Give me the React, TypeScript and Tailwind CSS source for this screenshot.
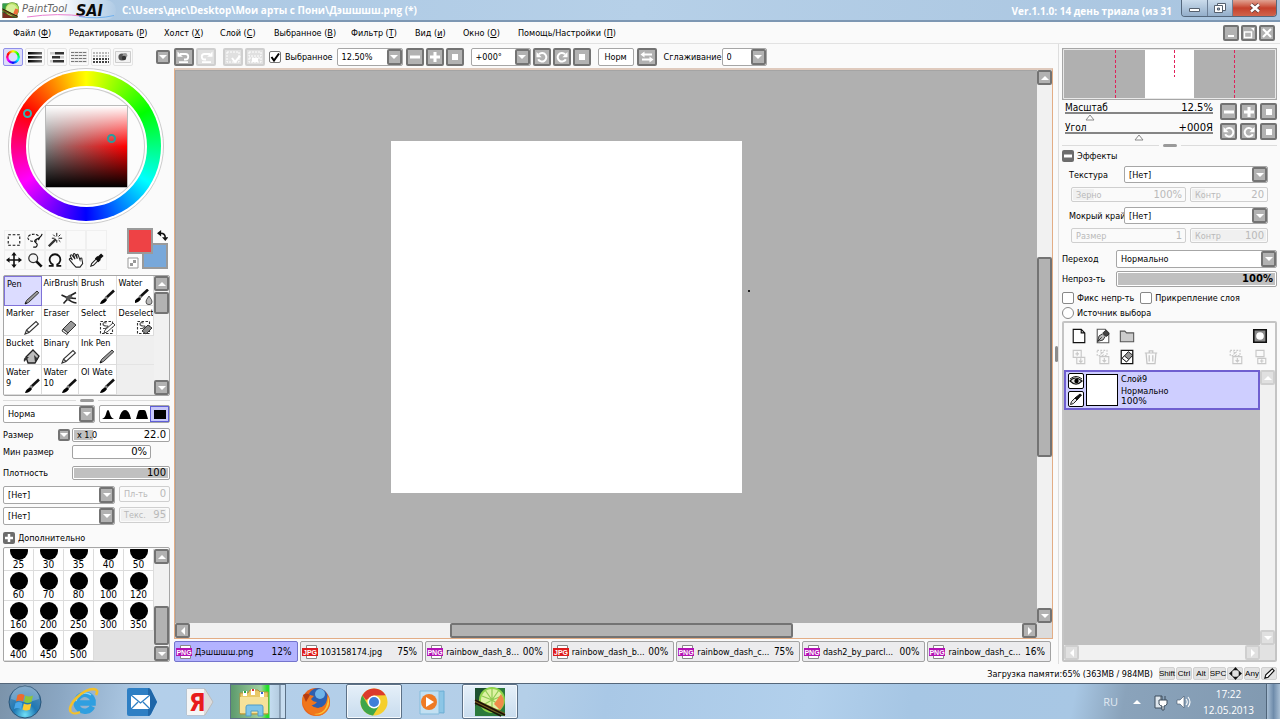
import React from "react";

type Dir = "up" | "down" | "left" | "right";

const ARROWS: Record<Dir, string> = {
  up: "M1 7 L5 3 L9 7Z",
  down: "M1 3 L5 7 L9 3Z",
  left: "M7 1 L3 5 L7 9Z",
  right: "M3 1 L7 5 L3 9Z",
};

function Arrow({ dir }: { dir: Dir }) {
  return (
    <svg viewBox="0 0 10 10" className="size-2.5 shrink-0">
      <path d={ARROWS[dir]} fill="#fff" />
    </svg>
  );
}

const WIDE = "font-['DejaVu_Sans',Verdana,sans-serif]";

function Gray({
  label,
  faded,
  className = "size-[17px]",
  children,
}: {
  label: string;
  faded?: boolean;
  className?: string;
  children: React.ReactNode;
}) {
  return (
    <button
      type="button"
      aria-label={label}
      disabled={faded}
      className={`flex shrink-0 items-center justify-center rounded-[2px] border-2 ${
        faded ? "border-[#cfcfcf] bg-[#e0e0e0]" : "border-[#737373] bg-[#b2b2b2]"
      } ${className}`}
    >
      {children}
    </button>
  );
}

const Minus = () => (
  <svg viewBox="0 0 14 14" className="size-3.5 shrink-0"><path d="M2 7h10" stroke="#fff" strokeWidth="3" /></svg>
);
const Plus = () => (
  <svg viewBox="0 0 14 14" className="size-3.5 shrink-0"><path d="M2 7h10M7 2v10" stroke="#fff" strokeWidth="3" /></svg>
);
const Stop = () => (
  <svg viewBox="0 0 14 14" className="size-3.5 shrink-0"><path d="M4 4h6v6h-6z" fill="#fff" /></svg>
);
const RotL = () => (
  <svg viewBox="0 0 14 14" className="size-3.5 shrink-0">
    <path d="M4 4.2a4.3 4.3 0 1 1-.8 5" fill="none" stroke="#fff" strokeWidth="2" />
    <path d="M1.5 2v5.2h5.2z" fill="#fff" />
  </svg>
);
const RotR = () => (
  <svg viewBox="0 0 14 14" className="size-3.5 shrink-0">
    <path d="M10 4.2a4.3 4.3 0 1 0 .8 5" fill="none" stroke="#fff" strokeWidth="2" />
    <path d="M12.5 2v5.2h-5.2z" fill="#fff" />
  </svg>
);
const Undo = () => (
  <svg viewBox="0 0 16 14" className="h-3.5 w-4 shrink-0">
    <path d="M4 4h5.5a2.7 2.7 0 0 1 0 5.5H8M3 12.2h9" fill="none" stroke="#fff" strokeWidth="1.8" />
    <path d="M1.5 6.8V1.5L6.8 6.8z" fill="#fff" />
  </svg>
);
const Redo = () => (
  <svg viewBox="0 0 16 14" className="h-3.5 w-4 shrink-0">
    <path d="M12 4H6.5a2.7 2.7 0 0 0 0 5.5H8M4 12.2h9" fill="none" stroke="#fff" strokeWidth="1.8" />
    <path d="M14.5 6.8V1.5L9.2 6.8z" fill="#fff" />
  </svg>
);

function Scrollbar({
  vertical,
  before,
  thumb,
  after,
  faded,
}: {
  vertical?: boolean;
  before: number;
  thumb: number;
  after: number;
  faded?: boolean;
}) {
  return (
    <div className={`flex shrink-0 bg-[#f1f1f1] ${vertical ? "w-[15px] flex-col" : "h-[15px] min-w-0 flex-1"}`}>
      <Gray label="Назад" faded={faded} className="size-[15px]"><Arrow dir={vertical ? "up" : "left"} /></Gray>
      <div className={`flex flex-1 ${vertical ? "flex-col" : ""}`}>
        <div style={{ flexGrow: before }} />
        {thumb > 0 && (
          <div
            className="basis-0 rounded-[2px] border-2 border-[#737373] bg-[#b2b2b2]"
            style={{ flexGrow: thumb }}
          />
        )}
        <div style={{ flexGrow: after }} />
      </div>
      <Gray label="Вперёд" faded={faded} className="size-[15px]"><Arrow dir={vertical ? "down" : "right"} /></Gray>
    </div>
  );
}

function Combo({
  id,
  value,
  label,
  className,
}: {
  id: string;
  value: string;
  label?: string;
  className: string;
}) {
  return (
    <div className={`relative flex rounded-[2px] border border-[#a6a6a6] bg-white ${className}`}>
      <select id={id} aria-label={label} className="min-w-0 flex-1 appearance-none bg-transparent pl-1 outline-none">
        <option>{value}</option>
      </select>
      <span className="pointer-events-none absolute inset-y-0 right-0 flex w-[15px] items-center justify-center rounded-[2px] border-2 border-[#737373] bg-[#b2b2b2]">
        <Arrow dir="down" />
      </span>
    </div>
  );
}

function ValueBar({
  id,
  label,
  caption,
  value,
  fill,
  disabled,
  bold,
  className,
}: {
  id: string;
  label?: string;
  caption?: string;
  value: string;
  fill: number;
  disabled?: boolean;
  bold?: boolean;
  className: string;
}) {
  return (
    <div
      className={`relative flex items-center rounded-[2px] border ${
        disabled ? "border-[#cfcfcf] bg-[#fafafa] text-[#b9b9b9]" : "border-[#a2a2a2] bg-white"
      } ${className}`}
    >
      <span
        className={`absolute inset-y-px left-px ${disabled ? "bg-[#f0f0f0]" : "bg-[#c0c0c0]"}`}
        style={{ width: `calc(${fill}% - 2px)` }}
      />
      {caption && (
        <label htmlFor={id} className="relative shrink-0 pl-1">{caption}</label>
      )}
      <input
        id={id}
        aria-label={label}
        disabled={disabled}
        defaultValue={value}
        className={`relative w-0 min-w-0 flex-1 bg-transparent pr-[3px] text-right text-[10px] outline-none ${WIDE} ${bold ? "font-bold" : ""}`}
      />
    </div>
  );
}

function Splitter() {
  return (
    <div className="flex h-[9px] items-center">
      <div className="h-px flex-1 bg-[#dcdcdc]" />
      <div className="mx-1 h-[3px] w-3.5 rounded-sm bg-[#9a9a9a]" />
      <div className="h-px flex-1 bg-[#dcdcdc]" />
    </div>
  );
}

/* ---------- title and menu ---------- */

function SaiMark({ className }: { className: string }) {
  return (
    <svg viewBox="0 0 32 32" className={className}>
      <path d="M1 3h28v27H1z" fill="#1d5a2c" />
      <path d="M1 3h12l-6 14-6 4z" fill="#35a04a" />
      <circle cx="19" cy="14" r="13" fill="#b9e26a" stroke="#4d8c1e" strokeWidth="1.2" />
      <circle cx="18" cy="14" r="10" fill="#d6f09a" />
      <path d="M25 12l6 2-2 10-8-2z" fill="#ee6a3a" />
      <path d="M1 12l29 15-2 3L1 17z" fill="#7a5a20" />
      <path d="M1 13l28 14" stroke="#1c1408" strokeWidth="1.6" />
      <path d="M1 19l22 11H1z" fill="#7a2c22" />
    </svg>
  );
}

function TitleBar() {
  return (
    <header className="flex h-[22px] shrink-0 items-start justify-between border-b-2 border-[#7d97b3] bg-linear-to-r from-[#a9c6e2] via-[#b6d0e8] to-[#a8c4df] font-['Open_Sans','Noto_Sans',sans-serif] text-[10px] font-bold text-white">
      <div className="flex h-5 min-w-0 items-center">
        <div className="flex h-5 w-[116px] shrink-0 items-center rounded-r-full bg-linear-to-r from-white via-white to-[#b0cbe5] pl-0.5">
          <SaiMark className="size-[17px]" />
          <svg viewBox="0 0 96 20" className="h-5 w-24">
            <text x="3" y="12" fontSize="10" fontWeight="normal" fontStyle="italic" fill="#666" fontFamily="DejaVu Sans, sans-serif">PaintTool</text>
            <text x="57" y="16" fontSize="16" fontWeight="bold" fontStyle="italic" fill="#0a0a0a" fontFamily="DejaVu Sans Condensed, sans-serif">SAI</text>
            <path d="M8 17Q40 12.500 66 16.500" fill="none" stroke="#e87fd0" strokeWidth="1" />
            <path d="M60 16.500Q78 19.500 95 15.500" fill="none" stroke="#6fb0ee" strokeWidth="1" />
          </svg>
        </div>
        <h1 className="truncate pl-1.5 leading-[22px]">C:\Users\днс\Desktop\Мои арты с Пони\Дэшшшш.png (*)</h1>
      </div>
      <div className="flex shrink-0 items-start">
        <span className="pr-[9px] leading-[22px]">Ver.1.1.0: 14 день триала (из 31</span>
        <div className="mr-[3px] flex h-[17px] overflow-hidden rounded-b border border-t-0 border-[#54677c]">
          <button type="button" aria-label="Свернуть" className="flex w-[26px] items-center justify-center border-r border-[#6d8097] bg-linear-to-b from-[#cbdcec] to-[#93aeca]">
            <svg viewBox="0 0 14 12" className="h-3 w-3.5"><path d="M1.5 6.5h10v3h-10z" fill="#fff" stroke="#55606e" /></svg>
          </button>
          <button type="button" aria-label="Развернуть" className="flex w-[25px] items-center justify-center border-r border-[#6d8097] bg-linear-to-b from-[#cbdcec] to-[#93aeca]">
            <svg viewBox="0 0 14 12" className="h-3 w-3.5">
              <path d="M4.5 1.5h8v7h-8z" fill="#fff" stroke="#55606e" />
              <path d="M1.5 3.5h8v7h-8z" fill="#fff" stroke="#55606e" />
              <path d="M4.5 6h2v2h-2z" fill="#9fb6cd" stroke="#55606e" />
            </svg>
          </button>
          <button type="button" aria-label="Закрыть" className="flex w-[43px] items-center justify-center bg-linear-to-b from-[#e0a293] via-[#c5402c] to-[#d0644c]">
            <svg viewBox="0 0 14 12" className="h-3 w-3.5">
              <path d="M3 2.5l8 7M11 2.5l-8 7" stroke="#5c3a3a" strokeWidth="4" />
              <path d="M3 2.5l8 7M11 2.5l-8 7" stroke="#fff" strokeWidth="2.4" />
            </svg>
          </button>
        </div>
      </div>
    </header>
  );
}

const MENUS: [string, string][] = [
  ["Файл", "Ф"],
  ["Редактировать", "Р"],
  ["Холст", "Х"],
  ["Слой", "С"],
  ["Выбранное", "В"],
  ["Фильтр", "Т"],
  ["Вид", "и"],
  ["Окно", "О"],
  ["Помощь/Настройки", "П"],
];

function MenuBar() {
  return (
    <nav className="flex h-[22px] shrink-0 items-center justify-between border-b border-[#e2e2e2] pr-[5px] pl-[13px]">
      <div className="grid grid-cols-[56px_95px_56px_54px_77px_64px_48px_55px_auto]">
        {MENUS.map(([name, key]) => (
          <button key={name} type="button" className="text-left whitespace-nowrap">
            {name} (<u>{key}</u>)
          </button>
        ))}
      </div>
      <div className="flex gap-0.5">
        <Gray label="Свернуть документ" className="size-4"><svg viewBox="0 0 12 12" className="size-3 shrink-0"><path d="M3 9h6" stroke="#fff" strokeWidth="2" /></svg></Gray>
        <Gray label="Развернуть документ" className="size-4"><svg viewBox="0 0 12 12" className="size-3 shrink-0"><path d="M1.5 5h7v5.5h-7zM1 5h8" fill="none" stroke="#fff" strokeWidth="1.4" /><path d="M8 1h3v3z" fill="#fff" /></svg></Gray>
        <Gray label="Закрыть документ" className="size-4"><svg viewBox="0 0 12 12" className="size-3 shrink-0"><path d="M2 2l8 8M10 2l-8 8" stroke="#fff" strokeWidth="2" /></svg></Gray>
      </div>
    </nav>
  );
}

/* ---------- left panel ---------- */

function ModeIcon({ kind }: { kind: number }) {
  if (kind === 0)
    return <span className="block size-[14px] rounded-full bg-[conic-gradient(#ff0,#0f0,#0ff,#00f,#f0f,#f00,#ff0)] mask-[radial-gradient(circle,transparent_4px,#000_5px)]" />;
  if (kind === 1)
    return (
      <svg viewBox="0 0 16 14" className="h-3.5 w-4">
        <defs><linearGradient id="bars"><stop stopColor="#000" /><stop offset="1" stopColor="#666" /></linearGradient></defs>
        <path d="M1 2h14v2.5H1zM1 6h14v2.5H1zM1 10h14v2.5H1z" fill="url(#bars)" />
      </svg>
    );
  if (kind === 2)
    return (
      <svg viewBox="0 0 16 14" className="h-3.5 w-4">
        <path d="M1 2h5v2.5H1zM10 6h5v2.5h-5zM1 10h3v2.5H1z" fill="#ccc" />
        <path d="M6 2h9v2.5H6zM3 6h8v2.5H3zM4 10h11v2.5H4z" fill="#333" />
      </svg>
    );
  if (kind === 3)
    return (
      <svg viewBox="0 0 18 14" className="h-3.5 w-[18px]">
        <path d="M1 2.5h16M1 5.5h16M1 8.5h16M1 11.5h16" stroke="#ccc" strokeWidth="1.6" />
        <path d="M1 2.5h16M1 5.5h16M1 8.5h16M1 11.5h16" stroke="#777" strokeWidth="1" strokeDasharray="3 1" />
      </svg>
    );
  if (kind === 4)
    return (
      <svg viewBox="0 0 18 14" className="h-3.5 w-[18px]">
        <path d="M1 3h16M1 6h16" stroke="#bbb" strokeWidth="2" strokeDasharray="2 1" />
        <path d="M1 9h16M1 12h16" stroke="#444" strokeWidth="2" strokeDasharray="2 1" />
      </svg>
    );
  return (
    <svg viewBox="0 0 16 14" className="h-3.5 w-4">
      <path d="M.5 1.5h15v11H.5z" fill="#f2f2f2" stroke="#ccc" />
      <circle cx="7" cy="7" r="3.6" fill="#555" />
      <circle cx="10" cy="5.5" r="2.4" fill="#999" />
      <circle cx="9" cy="8" r="2.2" fill="#333" />
    </svg>
  );
}

const MODES = ["Цветовой круг", "RGB", "HSV", "Палитра", "Образцы", "Блокнот"];

function ColorWheel() {
  return (
    <div className="mt-px ml-[5px] flex size-[156px] items-center justify-center rounded-full border border-[#ccc] bg-white">
      <div className="relative flex size-[150px] items-center justify-center rounded-full bg-[conic-gradient(#ff0,#0f0,#0ff,#00f,#f0f,#f00,#ff0)]">
        <div className="flex size-[121px] items-center justify-center rounded-full border-2 border-white bg-[#ccc] p-px">
          <div className="flex size-full items-center justify-center rounded-full bg-[#fcfcfc]">
            <div className="relative size-[83px] shrink-0 border border-[#bbb] bg-[linear-gradient(to_bottom,#fff,transparent_50%,#000),linear-gradient(to_right,#808080,#f00)]">
              <span className="absolute top-[28px] left-[61px] size-[9px] rounded-full border-2 border-[#2b9c9c]" />
            </div>
          </div>
        </div>
        <span className="absolute top-[38px] left-[12px] size-[9px] rounded-full border-2 border-[#35b3b3]" />
      </div>
    </div>
  );
}

function Tool({ kind }: { kind: string }) {
  const s = { fill: "none", stroke: "#111", strokeWidth: 1.4 } as const;
  return (
    <svg viewBox="0 0 18 18" className="size-4">
      {kind === "rect" && <path d="M2.5 3h13v12h-13z" {...s} strokeWidth="1.200" strokeDasharray="3 2" />}
      {kind === "lasso" && (
        <>
          <ellipse cx="7.500" cy="6.500" rx="6.500" ry="4" {...s} strokeWidth="1.200" strokeDasharray="3 1.5" />
          <path d="M17 2q-1 4-6 6-4 2-1 4t0 5h-3" {...s} strokeWidth="1.300" />
        </>
      )}
      {kind === "wand" && (
        <>
          <path d="M2 16l8-8" stroke="#333" strokeWidth="2.6" />
          <path d="M11 1v4M11 9v3M5.5 7h3M13 7h4M7 3l2 2M15 3l-2 2M15 11l-2-2" {...s} strokeWidth="1.1" />
        </>
      )}
      {kind === "move" && (
        <>
          <path d="M9 2v14M2 9h14" {...s} strokeWidth="1.8" />
          <path d="M9 0l3 4H6zM9 18l3-4H6zM0 9l4-3v6zM18 9l-4-3v6z" fill="#111" />
        </>
      )}
      {kind === "zoom" && (
        <>
          <circle cx="7" cy="7" r="5" fill="#f4f4f4" stroke="#333" strokeWidth="1.4" />
          <path d="M10.5 10.5L16.5 16.5" stroke="#111" strokeWidth="3" />
        </>
      )}
      {kind === "rotate" && <path d="M2 15.500h4.500v-1.500a6 6 0 1 1 5 0v1.500H16" {...s} strokeWidth="2" />}
      {kind === "hand" && (
        <path d="M6 14L1.5 8.5q0-2 2-1L5 9 2.5 4.5q.5-2 2-1L8 8 6 2.5q1-1.500 2 0L10.500 7.500 9.500 3q1.500-1 2 .5L13.500 9q.5-3 2-2l1 6-3 4H9z" fill="#fff" stroke="#222" strokeWidth="1.2" />
      )}
      {kind === "drop" && (
        <>
          <path d="M2 16l1-3 6-6 2 2-6 6z" fill="#fff" stroke="#222" strokeWidth="1.2" />
          <path d="M8 6l4 4M10 8l5-5" stroke="#111" strokeWidth="4" />
        </>
      )}
    </svg>
  );
}

const TOOLS = ["rect", "lasso", "wand", "", "", "move", "zoom", "rotate", "hand", "drop"];

function BrushIcon({ kind }: { kind: string }) {
  return (
    <svg viewBox="0 0 18 16" className="h-4 w-[18px]">
      {(kind === "brush" || kind === "water") && (
        <g transform={kind === "water" ? "translate(-3 -1)" : ""}>
          <path d="M16 1.500L8 9" stroke="#111" strokeWidth="2.600" />
          <path d="M9 8l-2.500 3" stroke="#888" strokeWidth="2.800" />
          <path d="M7.500 9.500Q3 10.500 2 15q4.500 0 7-4z" fill="#000" />
        </g>
      )}
      {kind === "water" && <path d="M14 7q-3.500 4.500-3 6a3 2.600 0 0 0 6 0q.5-1.500-3-6z" fill="#bbb" stroke="#555" />}
      {kind === "pen" && (
        <>
          <path d="M2 15l1.500-3.500L14 2l1.800 1.800L5.500 13.500z" fill="#999" stroke="#333" strokeWidth="1" />
          <path d="M2 15l.8-2 1.300 1.200z" fill="#000" />
        </>
      )}
      {kind === "marker" && (
        <path d="M2 15l1.500-4L13 2.500l2.400 2.400L6 13.500zM3.500 11l2.500 2.500" fill="#fff" stroke="#333" strokeWidth="1.100" />
      )}
      {kind === "air" && (
        <>
          <path d="M1.500 6l5.500 2.500 9-5M3.500 14.500L8 9.500q3 4 8.500 4.500M8 9l8 .5" fill="none" stroke="#222" strokeWidth="1.600" />
          <path d="M5 8.500l5-3 3 3-5 3.500z" fill="#555" />
        </>
      )}
      {kind === "eraser" && (
        <>
          <path d="M3 10l8-8 5 4-8 8z" fill="#999" stroke="#333" />
          <path d="M3 10l5 4-1 1.500-5-3.500z" fill="#eee" stroke="#333" />
        </>
      )}
      {(kind === "select" || kind === "deselect") && (
        <>
          <path d="M2.500 2.500h12v12h-12z" fill="none" stroke="#333" strokeWidth="1.100" strokeDasharray="2.500 1.500" />
          <path d="M8.500 4q-3.500-1-3.500 1t3.500 2-1 2.500H5" fill="none" stroke="#555" strokeWidth="1.200" />
          {kind === "select" ? (
            <path d="M6 14l1-3 8-7 2 2-8 7z" fill="#fff" stroke="#444" />
          ) : (
            <path d="M7 12l6-6 4 3-6 6z" fill="#888" stroke="#333" />
          )}
        </>
      )}
      {kind === "bucket" && (
        <>
          <path d="M3 9l7-7 6 6-4 7H5z" fill="#bbb" stroke="#222" strokeWidth="1.300" />
          <path d="M3 9q-3 1-2 5l5-5z" fill="#333" />
          <path d="M11 7l4 4-3 3z" fill="#333" />
        </>
      )}
    </svg>
  );
}

const BRUSHES: [string, string, string?][] = [
  ["Pen", "pen"], ["AirBrush", "air"], ["Brush", "brush"], ["Water", "water"],
  ["Marker", "marker"], ["Eraser", "eraser"], ["Select", "select"], ["Deselect", "deselect"],
  ["Bucket", "bucket"], ["Binary", "marker"], ["Ink Pen", "pen"], ["", ""],
  ["Water", "brush", "9"], ["Water", "brush", "10"], ["Ol Wate", "brush"], ["", ""],
];

const SIZES = [25, 30, 35, 40, 50, 60, 70, 80, 100, 120, 160, 200, 250, 300, 350, 400, 450, 500];

const TIPS = [
  "M1 11q3-1 4-5q1-4 2-4t2 4q1 4 4 5z",
  "M1 11q2-9 6-9t6 9z",
  "M1 11l2-7q.5-2 2-2h4q1.500 0 2 2l2 7z",
  "M1 2h12v9H1z",
];

function LeftPanel() {
  return (
    <aside className="flex w-[174px] shrink-0 flex-col pr-1 pl-[3px]">
      <div className="mt-[3px] flex h-5 items-center justify-between">
        <div className="flex gap-0.5">
          {MODES.map((m, i) => (
            <button
              key={m}
              type="button"
              aria-label={m}
              className={`flex h-[18px] w-5 items-center justify-center overflow-hidden rounded-[2px] border ${
                i === 0 ? "border-[#8f8fe8] bg-[#dcdcfa]" : "border-[#e4e4e4]"
              }`}
            >
              <ModeIcon kind={i} />
            </button>
          ))}
        </div>
        <Gray label="Меню цвета" className="size-3.5"><Arrow dir="down" /></Gray>
      </div>

      <ColorWheel />

      <div className="mt-1 flex h-[42px] justify-between">
        <div className="ml-px grid h-[42px] w-[103px] grid-cols-5 pt-0.5">
          {TOOLS.map((t, i) => (
            <button key={i} type="button" aria-label={t || "Пусто"} className="flex items-center justify-center border border-[#f0f0f0]">
              <Tool kind={t} />
            </button>
          ))}
        </div>
        <div className="relative mr-0.5 h-[41px] w-[41px]">
          <button type="button" aria-label="Второй цвет" className="absolute right-0 bottom-0 size-[26px] border-2 border-[#9a9a9a] bg-[#78a8da]" />
          <button type="button" aria-label="Основной цвет" className="absolute top-0 left-0 size-[26px] border-2 border-[#9a9a9a] bg-[#ee4245]" />
          <svg viewBox="0 0 12 12" className="absolute top-0.5 right-0 size-[11px]">
            <path d="M4 3.500q5 0 5 5" fill="none" stroke="#111" strokeWidth="1.800" />
            <path d="M0 3.500L4.500 0v7zM5.500 8h7l-3.500 4z" fill="#111" />
          </svg>
          <svg viewBox="0 0 12 12" className="absolute bottom-0 left-0 size-3">
            <path d="M1 1h10v10H1z" fill="#fff" stroke="#999" />
            <path d="M3 6h3v3H3zM6 3h3v3H6z" fill="#999" />
          </svg>
        </div>
      </div>

      <div className="mt-[5px] flex h-[121px] rounded-[2px] border border-[#a6a6a6]">
        <div className="grid flex-1 grid-cols-4 grid-rows-4">
          {BRUSHES.map(([name, icon, second], i) => (
            <button
              key={i}
              type="button"
              aria-label={name || "Пусто"}
              className={`relative flex min-w-0 items-start overflow-hidden pt-0.5 pl-0.5 text-left leading-[11px] whitespace-nowrap ${
                i === 0
                  ? "border border-[#7f72d8] bg-[#dcdcff]"
                  : name
                    ? "border-r border-b border-[#dcdcdc] bg-white"
                    : "border-b border-[#e4e4e4] bg-[#efefef]"
              }`}
            >
              <span>
                {name}
                {second && <><br />{second}</>}
              </span>
              {icon && <span className="absolute right-0 bottom-0"><BrushIcon kind={icon} /></span>}
            </button>
          ))}
        </div>
        <Scrollbar vertical before={1} thumb={19} after={68} />
      </div>

      <Splitter />

      <div className="flex h-[18px] gap-1">
        <Combo id="mode" label="Режим кисти" value="Норма" className="flex-1" />
        <div className="flex w-[71px] rounded-[2px] border border-[#a6a6a6] bg-white">
          {TIPS.map((d, i) => (
            <button key={d} type="button" aria-label={`Форма ${i + 1}`} className={`flex flex-1 items-center justify-center ${i === 3 ? "border border-[#5f5fd8] bg-[#c9c9fa]" : ""}`}>
              <svg viewBox="0 0 14 12" className="h-3 w-3.5 shrink-0"><path d={d} fill="#000" /></svg>
            </button>
          ))}
        </div>
      </div>

      <div className="mt-[5px] flex h-3.5 items-center">
        <label htmlFor="size" className="w-[55px]">Размер</label>
        <Gray label="Множитель" className="size-3"><Arrow dir="down" /></Gray>
        <ValueBar id="size" caption="x 1.0" value="22.0" fill={22} className="ml-0.5 h-3.5 flex-1" />
      </div>
      <div className="mt-[3px] flex h-3.5 items-center">
        <label htmlFor="min" className="w-[69px]">Мин размер</label>
        <ValueBar id="min" value="0%" fill={0} className="h-3.5 w-[79px]" />
      </div>
      <div className="mt-[7px] flex h-3.5 items-center">
        <label htmlFor="density" className="w-[69px]">Плотность</label>
        <ValueBar id="density" value="100" fill={100} className="h-3.5 flex-1" />
      </div>
      <div className="mt-1.5 flex h-[18px] items-start gap-1">
        <Combo id="shape" label="Форма" value="[Нет]" className="h-[18px] flex-1" />
        <ValueBar id="shapeDens" caption="Пл-ть" value="0" fill={0} disabled className="h-4 w-[51px]" />
      </div>
      <div className="mt-[3px] flex h-[18px] items-start gap-1">
        <Combo id="texture1" label="Текстура кисти" value="[Нет]" className="h-[18px] flex-1" />
        <ValueBar id="texDens" caption="Текс." value="95" fill={95} disabled className="h-4 w-[51px]" />
      </div>
      <button type="button" className="mt-1.5 flex h-[13px] items-center gap-[3px]">
        <span className="flex size-3 items-center justify-center rounded-[2px] bg-[#6c6c6c]">
          <svg viewBox="0 0 12 12" className="size-3"><path d="M2 6h8M6 2v8" stroke="#fff" strokeWidth="2.500" /></svg>
        </span>
        Дополнительно
      </button>

      <div className="mt-[3px] mb-0.5 flex min-h-24 flex-1 rounded-[2px] border border-[#a6a6a6] pt-px">
        <div className="flex h-full min-h-0 flex-1 flex-col justify-end overflow-hidden bg-[#e2e2e2]">
          <div className="grid h-[120px] shrink-0 grid-cols-5 grid-rows-4">
            {SIZES.map((n) => (
              <button key={n} type="button" className="flex flex-col items-center border-r border-b border-[#dcdcdc] bg-white pt-px">
                <span className="size-[18px] shrink-0 rounded-full bg-black" />
                <span className="text-[10px] leading-[9px]">{n}</span>
              </button>
            ))}
          </div>
        </div>
        <Scrollbar vertical before={44} thumb={36} after={1} />
      </div>
    </aside>
  );
}

/* ---------- document area ---------- */

const TABS: [string, string, string][] = [
  ["PNG", "Дэшшшш.png", "12%"],
  ["JPG", "103158174.jpg", "75%"],
  ["PNG", "rainbow_dash_8...", "00%"],
  ["JPG", "rainbow_dash_b...", "00%"],
  ["PNG", "rainbow_dash_c...", "75%"],
  ["PNG", "dash2_by_parcl...", "00%"],
  ["PNG", "rainbow_dash_c...", "16%"],
];

function Center() {
  return (
    <main className="flex min-w-0 flex-1 flex-col">
      <div className="flex h-6 shrink-0 items-center pt-px">
        <Gray label="Отменить" className="h-[18px] w-5"><Undo /></Gray>
        <Gray label="Повторить" faded className="ml-0.5 h-[18px] w-5"><Redo /></Gray>
        <Gray label="Снять выделение" faded className="ml-[7px] h-[18px] w-5">
          <svg viewBox="0 0 16 14" className="h-3.5 w-4 shrink-0"><path d="M2 2h12v10H2z" fill="none" stroke="#fff" strokeDasharray="2 1" /><path d="M7 8l3 4 5-6" fill="none" stroke="#fff" strokeWidth="2" /></svg>
        </Gray>
        <Gray label="Инвертировать выделение" faded className="ml-0.5 h-[18px] w-5">
          <svg viewBox="0 0 16 14" className="h-3.5 w-4 shrink-0"><path d="M2 2h12v4H2zM2 8h12v4H2z" fill="none" stroke="#fff" strokeDasharray="2 1" /><path d="M5 8h6v4H5z" fill="#fff" /></svg>
        </Gray>
        <label className="ml-1 flex items-center gap-1">
          <span className="relative flex">
            <input type="checkbox" defaultChecked className="peer size-3 appearance-none rounded-[2px] border border-[#777] bg-white" />
            <svg viewBox="0 0 12 12" className="pointer-events-none absolute inset-0 hidden size-3 peer-checked:block"><path d="M2.500 6l2.500 3.500L10 2.500" fill="none" stroke="#000" strokeWidth="2" /></svg>
          </span>
          Выбранное
        </label>
        <Combo id="zoomTop" label="Масштаб вида" value="12.50%" className="ml-1 h-[18px] w-[66px]" />
        <div className="ml-[3px] flex gap-0.5">
          <Gray label="Уменьшить" className="h-[18px] w-[18px]"><Minus /></Gray>
          <Gray label="Увеличить" className="h-[18px] w-[18px]"><Plus /></Gray>
          <Gray label="Сброс масштаба" className="h-[18px] w-[18px]"><Stop /></Gray>
        </div>
        <Combo id="angleTop" label="Угол вида" value="+000°" className="ml-[7px] h-[18px] w-[60px]" />
        <div className="ml-0.5 flex gap-0.5">
          <Gray label="Повернуть влево" className="h-[18px] w-[18px]"><RotL /></Gray>
          <Gray label="Повернуть вправо" className="h-[18px] w-[18px]"><RotR /></Gray>
          <Gray label="Сброс угла" className="h-[18px] w-[18px]"><Stop /></Gray>
        </div>
        <button type="button" className="ml-[7px] h-[18px] w-9 rounded-[2px] border border-[#a6a6a6] bg-white">Норм</button>
        <Gray label="Отразить" className="ml-[3px] h-[18px] w-5">
          <svg viewBox="0 0 16 14" className="h-3.5 w-4 shrink-0"><path d="M4 4.500h9M3 9.500h9" stroke="#fff" strokeWidth="1.800" /><path d="M1.500 4.500L5.500 1.500v6zM14.500 9.500l-4-3v6z" fill="#fff" /></svg>
        </Gray>
        <label htmlFor="smooth" className="ml-[7px] w-[58px] whitespace-nowrap">Сглаживание</label>
        <Combo id="smooth" value="0" className="h-[18px] w-[45px]" />
      </div>

      <div className="mr-px flex min-h-0 flex-1 flex-col border border-t-2 border-[#e3ad85] border-t-[#dfcabd]">
        <div className="flex min-h-0 flex-1">
          <div className="relative min-w-0 flex-1 overflow-hidden border-t border-l border-[#a4a4a4] bg-[#b0b0b0]">
            <div className="absolute top-[70px] left-[215px] h-[352px] w-[351px] bg-white" />
            <div className="absolute top-[219px] left-[572px] size-0.5 bg-[#222]" />
          </div>
          <Scrollbar vertical before={174} thumb={198} after={152} />
        </div>
        <div className="flex bg-[#dcdcdc] pr-[15px]">
          <Scrollbar before={261} thumb={341} after={230} />
        </div>
      </div>

      <div className="my-0.5 flex h-[21px] shrink-0 gap-0.5 pr-[3px]">
        {TABS.map(([type, name, pct], i) => (
          <button
            key={i}
            type="button"
            className={`flex min-w-0 flex-1 items-center justify-between rounded-[2px] border pr-[5px] pl-px ${
              i === 0 ? "border-[#7474cc] bg-[#b3b3ff]" : "border-[#a2a2a2] bg-[#ececee]"
            }`}
          >
            <span className="flex min-w-0 items-center gap-[3px] whitespace-nowrap">
              <svg viewBox="0 0 16 16" className="size-4 shrink-0">
                <path d="M4.500 1.500h10v13h-10z" fill="#fff" stroke="#888" />
                <path d="M0 4h16v8H0z" fill={type === "PNG" ? "#b312b3" : "#dd1c1c"} />
                <text x="8" y="10.500" fontSize="7" fontWeight="bold" textAnchor="middle" fill="#fff" fontFamily="Liberation Sans">{type}</text>
              </svg>
              {name}
            </span>
            <span className="text-[10px]">{pct}</span>
          </button>
        ))}
      </div>
    </main>
  );
}

/* ---------- right panel ---------- */

function NavSlider({ label, value, pos }: { label: string; value: string; pos: number }) {
  return (
    <div className="relative flex h-[17px] flex-1 flex-col">
      <div className="flex h-[11px] items-center justify-between border-b-2 border-[#858585]">
        <span className="text-[10px] leading-[9px]">{label}</span>
        <span className={`text-[10px] leading-[9px] ${WIDE}`}>{value}</span>
      </div>
      <svg viewBox="0 0 10 7" className="absolute top-[11px] h-[7px] w-2.5 -translate-x-1/2" style={{ left: `${pos}%` }}>
        <path d="M1 6L5 1l4 5z" fill="#fff" stroke="#888" />
      </svg>
      <input type="range" aria-label={label} defaultValue={pos} className="absolute inset-0 opacity-0" />
    </div>
  );
}

function LayerIcon({ kind }: { kind: string }) {
  return (
    <svg viewBox="0 0 18 18" className="size-4">
      {kind === "new" && <path d="M2.500 1.500h9l4 4v11h-13zM11.500 1.500v4h4" fill="#fff" stroke="#111" strokeWidth="1.300" />}
      {kind === "vector" && (
        <>
          <path d="M2.500 1.500h9l4 4v11h-13z" fill="#fff" stroke="#555" strokeWidth="1.200" />
          <path d="M3 15l1.500-6 4-2.500 3 3-2.500 4z" fill="#bbb" stroke="#222" />
          <path d="M3 15l4.500-4.500" stroke="#222" />
          <path d="M9 5.500l3-3 4 4-3 3z" stroke="#222" fill="#444" />
        </>
      )}
      {kind === "folder" && <path d="M1.500 15.500v-12h5l2 2h8v10z" fill="#ccc" stroke="#555" strokeWidth="1.200" />}
      {kind === "mask" && (
        <>
          <path d="M2 2h14v14H2z" fill="#888" stroke="#111" strokeWidth="1.800" />
          <circle cx="9" cy="9" r="4.300" fill="#fff" />
        </>
      )}
      {kind === "clear" && (
        <>
          <path d="M2.500 1.500h13v15h-13z" fill="#fff" stroke="#111" strokeWidth="1.400" />
          <path d="M3.500 10.500l7-7.500 5 4-7 7.500z" fill="#999" stroke="#111" />
          <path d="M3.500 10.500l2.500-2.800 5 4-2.500 2.800z" fill="#fff" stroke="#111" />
        </>
      )}
      {kind === "trash" && <path d="M2 4.500h14M7 4V2h4v2M3.500 5l1 11.500h9l1-11.500M7 7v7M11 7v7" fill="none" stroke="#c4c4c4" strokeWidth="1.400" />}
      {kind === "down" && <path d="M2.500 1.500h9v8h-9zM6.500 9.500h9v7h-9zM7 3v4.500M5 5.500h4M11 10.500v4.500M9 13l2 2 2-2" fill="none" stroke="#c8c8c8" strokeWidth="1.300" />}
      {kind === "merge" && (
        <>
          <path d="M2.500 1.500h11v6h-11z" fill="none" stroke="#c8c8c8" strokeWidth="1.300" strokeDasharray="2 1.500" />
          <path d="M6 3l4 3M10 3L6 6" stroke="#c8c8c8" strokeWidth="1.200" />
          <path d="M5.500 8.500h10v8h-10zM10.500 10v5M8.500 12.500l2 2 2-2" fill="none" stroke="#c8c8c8" strokeWidth="1.300" />
        </>
      )}
      {kind === "maskDown" && <path d="M4.500 1.500h9v7h-9zM6.500 10.500h9v6h-9zM11 11.500v4M9 13.500h4" fill="none" stroke="#c8c8c8" strokeWidth="1.300" />}
    </svg>
  );
}

function IconButton({ kind }: { kind: string }) {
  return <button type="button" aria-label={kind}><LayerIcon kind={kind} /></button>;
}

function RightPanel() {
  return (
    <aside className="flex w-[222px] shrink-0 flex-col border-l border-[#dedede] pr-[3px] pl-[3px]">
      <div className="mt-1 h-[52px] border border-[#a6a6a6] bg-[#b0b0b0]">
        <svg viewBox="0 0 213 50" preserveAspectRatio="none" className="h-full w-full">
          <path d="M.5 .5h212v49H.5z" fill="none" stroke="#e8e8e8" />
          <path d="M82 1h49v48H82z" fill="#fff" />
          <path d="M52.500 1v48" stroke="#e0205a" strokeDasharray="3 2" />
          <path d="M171.500 1v48" stroke="#e0205a" strokeDasharray="3 2" />
          <path d="M111.500 1v27" stroke="#e0205a" strokeDasharray="3 2" />
        </svg>
      </div>
      <div className="mt-[3px] flex flex-col gap-[3px] pl-[3px]">
        <div className="flex gap-[3px]">
          <NavSlider label="Масштаб" value="12.5%" pos={17} />
          <span className="w-px" />
          <Gray label="Уменьшить вид"><Minus /></Gray>
          <Gray label="Увеличить вид"><Plus /></Gray>
          <Gray label="Исходный масштаб"><Stop /></Gray>
        </div>
        <div className="flex gap-[3px]">
          <NavSlider label="Угол" value="+000Я" pos={50} />
          <span className="w-px" />
          <Gray label="Влево"><RotL /></Gray>
          <Gray label="Вправо"><RotR /></Gray>
          <Gray label="Исходный угол"><Stop /></Gray>
        </div>
      </div>
      <div className="pt-px"><Splitter /></div>
      <button type="button" className="flex h-3 items-center gap-[3px]">
        <span className="flex size-3 items-center justify-center rounded-[2px] bg-[#6c6c6c]">
          <svg viewBox="0 0 12 12" className="size-3"><path d="M2 4.500h8v3H2z" fill="#fff" /></svg>
        </span>
        Эффекты
      </button>
      <div className="mr-[9px] ml-[9px] flex flex-col">
        <div className="mt-1 -ml-0.5 flex h-[17px] items-center">
          <label htmlFor="texture" className="w-[55px]">Текстура</label>
          <Combo id="texture" value="[Нет]" className="h-[17px] flex-1" />
        </div>
        <div className="mt-1 flex h-[15px] gap-1">
          <ValueBar id="grain" caption="Зерно" value="100%" fill={20} disabled className="flex-1" />
          <ValueBar id="contrast1" caption="Контр" value="20" fill={20} disabled className="w-[78px]" />
        </div>
        <div className="mt-[5px] -ml-0.5 flex h-[17px] items-center">
          <label htmlFor="wet" className="w-[55px] whitespace-nowrap">Мокрый край</label>
          <Combo id="wet" value="[Нет]" className="h-[17px] flex-1" />
        </div>
        <div className="mt-1 flex h-[15px] gap-1">
          <ValueBar id="wetSize" caption="Размер" value="1" fill={0} disabled className="flex-1" />
          <ValueBar id="contrast2" caption="Контр" value="100" fill={100} disabled className="w-[78px]" />
        </div>
      </div>
      <div className="mt-[7px] flex h-[18px] items-center">
        <label htmlFor="blend" className="w-[54px]">Переход</label>
        <Combo id="blend" value="Нормально" className="h-[18px] flex-1" />
      </div>
      <div className="mt-[3px] flex h-4 items-center">
        <label htmlFor="opacity" className="w-[54px]">Непроз-ть</label>
        <ValueBar id="opacity" value="100%" fill={100} bold className="h-4 flex-1" />
      </div>
      <div className="mt-1 flex h-[13px] items-center gap-1.5 whitespace-nowrap">
        <label className="flex items-center gap-[3px]"><input type="checkbox" className="size-3 appearance-none rounded-[2px] border border-[#888] bg-white checked:bg-[#888]" />Фикс непр-ть</label>
        <label className="flex items-center gap-[3px]"><input type="checkbox" className="size-3 appearance-none rounded-[2px] border border-[#888] bg-white checked:bg-[#888]" />Прикрепление слоя</label>
      </div>
      <label className="mt-0.5 flex h-[13px] items-center gap-[3px]"><input type="radio" className="size-3 appearance-none rounded-full border border-[#888] bg-white checked:bg-[#888]" />Источник выбора</label>

      <div className="mt-0.5 mb-0.5 flex min-h-40 flex-1 flex-col rounded-[2px] border-2 border-[#c4c4c4]">
        <div className="flex flex-col gap-[5px] px-[7px] py-[5px]">
          <div className="flex gap-2">
            <IconButton kind="new" /><IconButton kind="vector" /><IconButton kind="folder" />
            <span className="flex-1" />
            <IconButton kind="mask" />
          </div>
          <div className="flex gap-2">
            <IconButton kind="down" /><IconButton kind="merge" /><IconButton kind="clear" /><IconButton kind="trash" />
            <span className="flex-1" />
            <IconButton kind="merge" /><IconButton kind="maskDown" />
          </div>
        </div>
        <div className="flex min-h-0 flex-1">
          <div className="flex-1 bg-[#c0c0c0]">
            <div className="flex h-10 items-center border-2 border-[#6f5fd0] bg-[#ceceff] pl-0.5">
              <div className="flex flex-col gap-0.5">
                <button type="button" aria-label="Видимость" className="flex size-4 items-center justify-center rounded-[2px] border border-black bg-white">
                  <svg viewBox="0 0 14 12" className="h-3 w-3.5 shrink-0"><path d="M1 6q5-6 12 0-6 6-12 0z" fill="#ddd" stroke="#111" strokeWidth="1.200" /><circle cx="7.500" cy="6" r="2.200" /><path d="M1 4q6-5 12 0" fill="none" stroke="#111" /></svg>
                </button>
                <button type="button" aria-label="Рисование" className="flex size-4 items-center justify-center rounded-[2px] border border-black bg-white">
                  <svg viewBox="0 0 14 14" className="size-3.5 shrink-0"><path d="M1.500 12.500l1-3 4-4 2 2-4 4z" fill="#ddd" stroke="#222" /><path d="M6 6l5-4 1.500 1L8 8z" fill="#111" stroke="#111" /></svg>
                </button>
              </div>
              <div className="ml-0.5 h-8 w-8 border border-black bg-white" />
              <div className="ml-[3px] flex h-full flex-col pt-px leading-[11px]">
                <span className="mt-px mb-px">Слой9</span>
                <span>Нормально</span>
                <span className={`leading-[9px] ${WIDE}`}>100%</span>
              </div>
            </div>
          </div>
          <Scrollbar vertical faded before={1} thumb={0} after={1} />
        </div>
        <div className="flex bg-[#e2e2e2] pr-[15px]">
          <Scrollbar faded before={1} thumb={0} after={1} />
        </div>
      </div>
    </aside>
  );
}

/* ---------- status and taskbar ---------- */

function StatusBar() {
  return (
    <footer className="flex h-[19px] shrink-0 items-center justify-end gap-1.5 pr-[3px]">
      <span>Загрузка памяти:65% (363MB / 984MB)</span>
      <div className="flex gap-px">
        {["Shift", "Ctrl", "Alt", "SPC", "move", "Any", "pen"].map((k) => (
          <span key={k} className="flex h-[13px] w-4 items-center justify-center rounded-[2px] border border-[#d0d0d0] bg-[#e2e2e2] font-['Liberation_Sans',Arial,sans-serif] text-[8px]">
            {k === "move" ? (
              <svg viewBox="0 0 14 14" className="size-[13px] shrink-0"><path d="M7 0l3 3.500H4zM7 14l3-3.500H4zM0 7l3.500-3v6zM14 7l-3.500-3v6z" fill="#111" /><path d="M5 3L3 5M9 3l2 2M5 11L3 9M9 11l2-2" stroke="#111" /></svg>
            ) : k === "pen" ? (
              <svg viewBox="0 0 14 14" className="size-[13px] shrink-0"><path d="M2 12l1-3.500L10 2l2 2-6.500 7z" fill="#fff" stroke="#111" strokeWidth="1.200" /></svg>
            ) : (
              k
            )}
          </span>
        ))}
      </div>
    </footer>
  );
}

function TaskIcon({ kind }: { kind: string }) {
  return (
    <svg viewBox="0 0 32 32" className="size-8 shrink-0">
      {kind === "ie" && (
        <>
          <path d="M24.500 20.500a8.500 8.500 0 1 1 .5-6v2.500H10" fill="none" stroke="#2f9fe0" strokeWidth="5.500" />
          <path d="M23 9a9.500 9.500 0 0 0-15 6" fill="none" stroke="#8fd8fc" strokeWidth="1.500" />
          <path d="M3 26C-2 20 14 3 26 3q5 1 2 6" fill="none" stroke="#f2c02c" strokeWidth="2.600" />
          <path d="M3 26q3 3 9 0" fill="none" stroke="#f2c02c" strokeWidth="2" />
        </>
      )}
      {kind === "mail" && (
        <>
          <path d="M3 2h19q2 0 3 2l6 12-6 12q-1 2-3 2H3q-2 0-2-2V4q0-2 2-2z" fill="#2e7fc4" />
          <path d="M22 2q2 0 3 2l6 12-6 12q-1 2-3 2z" fill="#1f66a8" />
          <path d="M5 9h19v14H5z" fill="#fff" />
          <path d="M5 9l9.500 8L24 9M5 23l7-7M24 23l-7-7" fill="none" stroke="#2e7fc4" strokeWidth="1.300" />
        </>
      )}
      {kind === "ya" && (
        <>
          <path d="M3 3h18l8 13-8 13H3z" fill="#dcdcdc" stroke="#bbb" />
          <path d="M3 3h17v26H3z" fill="#f6f6f6" />
          <text x="5" y="25" fontSize="24" fontWeight="bold" fill="#e81c1c" fontFamily="DejaVu Sans Condensed, Liberation Sans">Я</text>
        </>
      )}
      {kind === "explorer" && (
        <>
          <path d="M2 7h8l2-3h8l2 2h8v22H2z" fill="#e9c968" stroke="#b4923c" />
          <path d="M5 5h4v5H5zM13 3h4v6h-4zM22 6h4v5h-4z" fill="#fff" />
          <path d="M6 5h2v2H6z" fill="#2a4" /><path d="M14 3h2v2h-2z" fill="#d33" /><path d="M23 6h2v2h-2z" fill="#36c" />
          <path d="M2 11h28v16H2z" fill="#f6e29a" />
          <path d="M8 30V21q0-2 2-2h13q2 0 2 2v9h-5v-5h-7v5z" fill="#7fc4ea" stroke="#4f9cc8" />
        </>
      )}
      {kind === "firefox" && (
        <>
          <circle cx="16" cy="16" r="14" fill="#e8641c" />
          <circle cx="18" cy="12" r="10" fill="#2c5fb0" />
          <circle cx="20" cy="8" r="5" fill="#6fb4e8" />
          <path d="M3 9q4-3 7 0l4 1-3 3q2 3 6 3-3 4-6 3 4 5 11 2 6-4 5-12 6 9 0 16t-14 4T2 16z" fill="#f0761c" />
          <path d="M28 10q3 8-2 14t-12 4q9 0 12-7 2-5 2-11z" fill="#fbc53a" />
          <path d="M3 9q4-3 7 0L6 16z" fill="#b43c12" />
        </>
      )}
      {kind === "chrome" && (
        <>
          <circle cx="16" cy="16" r="13.500" fill="#f5cf2e" />
          <path d="M16 2.500A13.500 13.500 0 0 1 27.700 9.300L16 9.500 8 14 4.300 9.300A13.500 13.500 0 0 1 16 2.500z" fill="#dc3a2c" />
          <path d="M4.300 9.300A13.500 13.500 0 0 0 15 29.500L21 20l-10.500 0z" fill="#3fa64a" />
          <circle cx="16" cy="16" r="6.500" fill="#fff" /><circle cx="16" cy="16" r="5" fill="#3f7fd8" />
        </>
      )}
      {kind === "media" && (
        <>
          <path d="M10 6l18-1v22l-18-1z" fill="#8cc6e6" stroke="#6aaed4" />
          <path d="M4 5h19v23H4z" fill="#c2e0f2" stroke="#84bcdc" />
          <circle cx="13" cy="16" r="8" fill="#ee7a24" />
          <path d="M10 11l8 5-8 5z" fill="#fff" />
        </>
      )}
      {kind === "sai" && (
        <>
          <path d="M1 2h30v28H1z" fill="#2c7a3c" />
          <path d="M1 2h14L4 18l-3 2z" fill="#1c5030" />
          <circle cx="18" cy="14" r="13" fill="#8fd44a" />
          <circle cx="18" cy="14" r="11" fill="#dff2a4" />
          <path d="M18 14V3M18 14l10-4M18 14l9 6M18 14L8 10M18 14L11 4M18 14l7-10M18 14v10M18 14l-9 5" stroke="#8fca52" strokeWidth="1.200" />
          <path d="M27 8q6 8-1 16l-6-6z" fill="#f08a4a" />
          <path d="M1 13l30 14v3L1 18z" fill="#7c5a20" />
          <path d="M1 14l30 15M1 17l26 13" stroke="#1c1408" strokeWidth="1.500" />
        </>
      )}
    </svg>
  );
}

const TASKS = ["ie", "mail", "ya", "explorer", "firefox", "chrome", "media", "sai"];

function Taskbar() {
  return (
    <div className="flex h-9 shrink-0 justify-between overflow-hidden border-t border-[#55677a] bg-[linear-gradient(100deg,#7b93aa_0,#8aa6c2_60px,#b3cfea_150px,#b4cfe8_520px,#a9c8e6_600px,#b2d0ec_800px,#a6c6e4_900px,#a8c7e4_1060px,#8aa3bb_1110px,#8199b0_1260px)] font-['Open_Sans','Noto_Sans',sans-serif]">
      <div className="flex gap-0.5">
        <button type="button" aria-label="Пуск" className="flex w-[54px] items-center pl-2">
          <svg viewBox="0 0 34 34" className="size-[34px] shrink-0">
            <defs>
              <radialGradient id="orb" cx=".5" cy=".9" r=".9"><stop stopColor="#6fe0f8" /><stop offset=".4" stopColor="#1f78b4" /><stop offset="1" stopColor="#5d8fb8" /></radialGradient>
            </defs>
            <circle cx="17" cy="17" r="16" fill="url(#orb)" stroke="#2a5578" />
            <path d="M3 14a14 13 0 0 1 28 0q-14 6-28 0z" fill="#fff" opacity=".25" />
            <path d="M9.500 10q3.500-2 7 0l-1.500 6.500q-3.500-2-7 0z" fill="#ee6a2c" />
            <path d="M17.500 10.500q3.500 2 7.500 0l-1.500 6.500q-4 2-7.500 0z" fill="#8cc63c" />
            <path d="M7.500 18q3.500-2 7 0L13 24q-3.500-2-7 0z" fill="#4aa8ea" />
            <path d="M15.800 18.500q3.500 2 7.500 0L22 24.500q-4 2-7.500 0z" fill="#fccb30" />
          </svg>
        </button>
        {TASKS.map((k) => (
          <button
            key={k}
            type="button"
            aria-label={k}
            className={`flex w-14 items-center justify-center ${
              k === "explorer"
                ? "border border-[#5c7187] bg-[linear-gradient(to_right,#5d9a6c_0,#9fd0a0_30px,#25e02a_36px,#25e02a_38px,#c4dcf0_39px,#b4cce0_48px,#5c7187_49px,#c8ddf0_50px)] pr-2"
                : k === "chrome" || k === "sai"
                  ? "rounded-[2px] border border-[#5c7187] bg-linear-to-b from-[#e6f0f9] to-[#c8dcee] shadow-[inset_0_0_0_1px_#f4f9fd]"
                  : ""
            }`}
          >
            <TaskIcon kind={k} />
          </button>
        ))}
      </div>
      <div className="flex items-center text-white">
        <span className="mr-3.5 text-[11px] text-[#e2eaf2]">RU</span>
        <svg viewBox="0 0 10 8" className="mr-[11px] h-2 w-2.5"><path d="M1 6l4-4 4 4z" fill="#fff" /></svg>
        <svg viewBox="0 0 16 18" className="mr-1.5 h-[18px] w-4">
          <path d="M2 3h7v12H2z" fill="#dfe7ee" stroke="#3c4c5c" />
          <path d="M8 3v4M12 3v4M6 7h8v4q-1 2-3 2v4H9v-4q-2 0-3-2z" fill="#fff" stroke="#3c4c5c" />
        </svg>
        <svg viewBox="0 0 16 18" className="h-[18px] w-4">
          <path d="M2 7h3l4-4v12l-4-4H2z" fill="#fff" stroke="#44566a" strokeWidth=".6" />
          <path d="M11 6q2.500 3 0 6M13 4q4 5 0 10" fill="none" stroke="#fff" strokeWidth="1.100" />
        </svg>
        <div className="w-[75px] text-center text-[10px] leading-4">
          <div>17:22</div>
          <div>12.05.2013</div>
        </div>
        <button type="button" aria-label="Свернуть все окна" className="h-full w-3.5 border-l border-[#50657a] bg-linear-to-r from-[#a9bfd4] via-[#6f8cab] to-[#a9bfd4]" />
      </div>
    </div>
  );
}

export default function App() {
  return (
    <div className="flex h-screen min-h-[700px] flex-col bg-[#fafafa] font-['DejaVu_Sans_Condensed','DejaVu_Sans',sans-serif] text-[9px] leading-3 text-black">
      <TitleBar />
      <MenuBar />
      <div className="flex min-h-0 flex-1">
        <LeftPanel />
        <Center />
        <div className="flex w-1 shrink-0 items-center justify-end">
          <div className="h-4 w-[3px] rounded-sm bg-[#8c8c8c]" />
        </div>
        <RightPanel />
      </div>
      <StatusBar />
      <Taskbar />
    </div>
  );
}
